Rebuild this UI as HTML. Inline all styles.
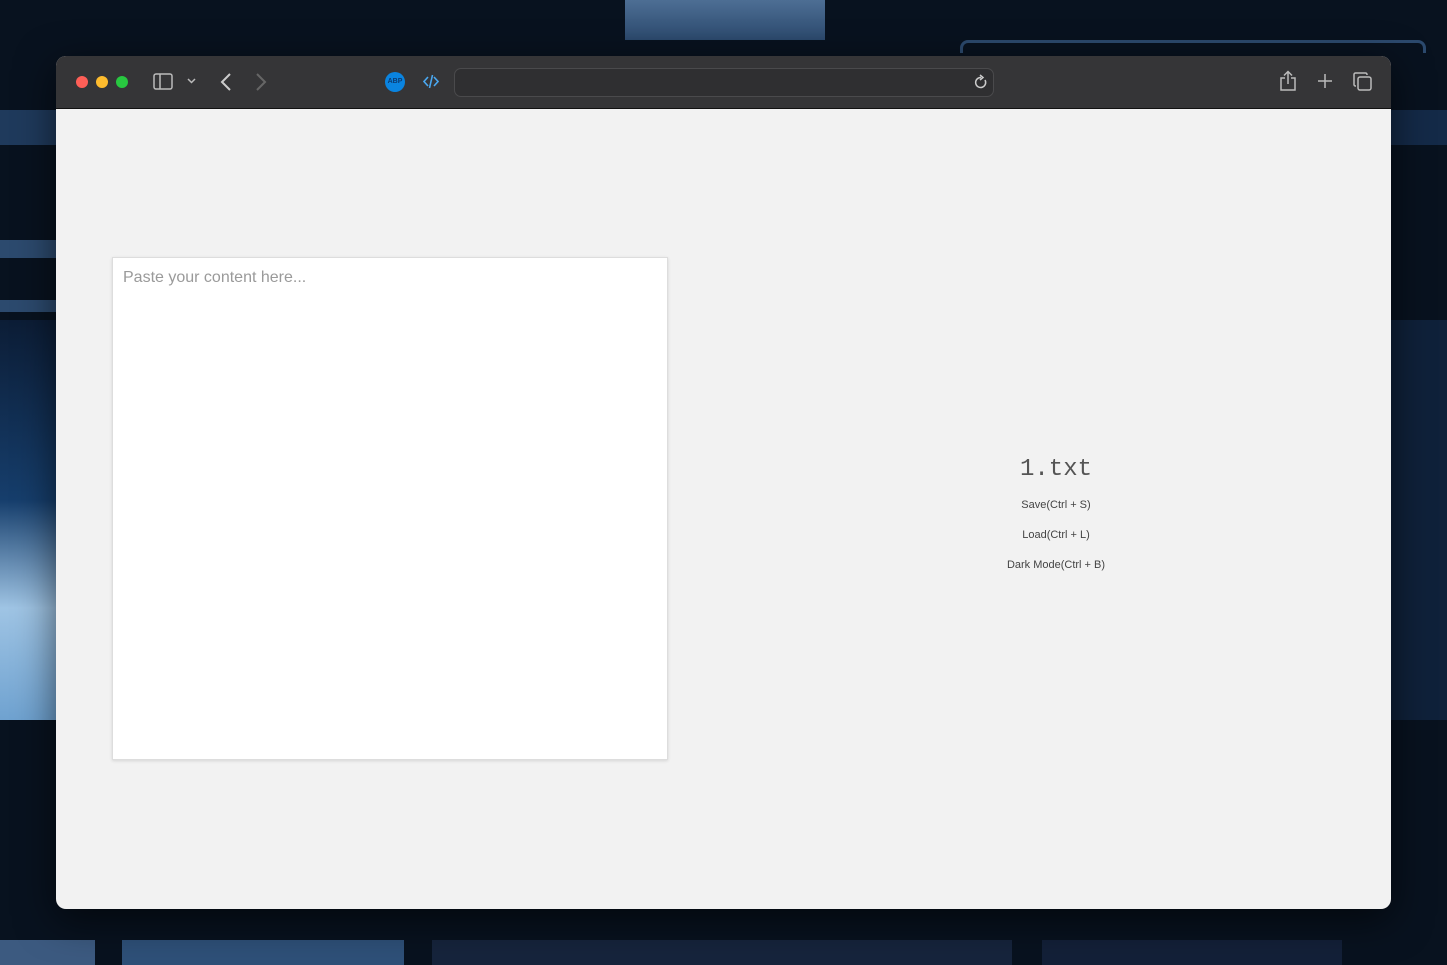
<!DOCTYPE html>
<html><head><meta charset="utf-8"><style>
html,body{margin:0;padding:0;width:1447px;height:965px;overflow:hidden;background:#08121f;font-family:"Liberation Sans",sans-serif;position:relative}
.bg{position:absolute}
.win{position:absolute;left:56px;top:56px;width:1335px;height:853px;border-radius:10px;overflow:hidden;background:#f2f2f2;box-shadow:0 10px 40px rgba(0,0,0,.6)}
.bar{position:absolute;left:0;top:0;width:100%;height:52px;background:#353537;border-bottom:1px solid #111}
.dot{position:absolute;top:20px;width:12px;height:12px;border-radius:50%}
.url{position:absolute;left:398px;top:12px;width:538px;height:27px;border:1px solid #4a4a4c;border-radius:7px;background:#2f2f31}
.ta{position:absolute;left:56px;top:201px;width:554px;height:501px;background:#fff;border:1px solid #ddd;box-shadow:0 1px 3px rgba(0,0,0,.12)}
.ph{position:absolute;left:10px;top:11px;font-size:16px;color:#9a9a9a}
.side{position:absolute;left:900px;width:200px;text-align:center;color:#444}
svg{position:absolute}
</style></head><body>
<div class="bg" style="left:0;top:110px;width:56px;height:35px;background:#1f3a5c"></div>
<div class="bg" style="left:0;top:240px;width:56px;height:18px;background:#2c4a6e"></div>
<div class="bg" style="left:0;top:300px;width:56px;height:12px;background:#2c4a6e"></div>
<div class="bg" style="left:0;top:320px;width:56px;height:400px;background:linear-gradient(180deg,#0c1d36 0%,#163e6c 45%,#9fc4e4 72%,#6fa2d0 100%)"></div>
<div class="bg" style="left:1391px;top:110px;width:56px;height:35px;background:#142a48"></div>
<div class="bg" style="left:1391px;top:320px;width:56px;height:400px;background:#0f213a"></div>
<div class="bg" style="left:625px;top:0;width:200px;height:40px;background:linear-gradient(#4d6e94,#2c4a6e)"></div>
<div class="bg" style="left:960px;top:40px;width:460px;height:10px;border:3px solid #2c4a6e;border-bottom:none;border-radius:8px 8px 0 0"></div>
<div class="bg" style="left:0;top:940px;width:95px;height:25px;background:#3c5a80"></div>
<div class="bg" style="left:122px;top:940px;width:282px;height:25px;background:#2e5078"></div>
<div class="bg" style="left:432px;top:940px;width:580px;height:25px;background:#16243c"></div>
<div class="bg" style="left:1042px;top:940px;width:300px;height:25px;background:#132038"></div>
<div class="win">
<div class="bar">
<div class="dot" style="left:20px;background:#fe5f57"></div>
<div class="dot" style="left:40px;background:#febc2e"></div>
<div class="dot" style="left:60px;background:#28c840"></div>
<svg style="left:97px;top:17px" width="20" height="17" viewBox="0 0 20 17"><rect x="1" y="1" width="18" height="15" rx="2" fill="none" stroke="#bbb" stroke-width="1.5"/><line x1="7" y1="1" x2="7" y2="16" stroke="#bbb" stroke-width="1.5"/></svg>
<svg style="left:131px;top:22px" width="9" height="6" viewBox="0 0 9 6"><path d="M1 1l3.5 3.5L8 1" fill="none" stroke="#bbb" stroke-width="1.5"/></svg>
<svg style="left:164px;top:17px" width="12" height="18" viewBox="0 0 12 18"><path d="M10 1L2 9l8 8" fill="none" stroke="#ccc" stroke-width="2"/></svg>
<svg style="left:199px;top:17px" width="12" height="18" viewBox="0 0 12 18"><path d="M2 1l8 8-8 8" fill="none" stroke="#666" stroke-width="2"/></svg>
<div style="position:absolute;left:329px;top:16px;width:20px;height:20px;border-radius:50%;background:#0a84e0;color:#0c3a70;font-size:7px;line-height:20px;text-align:center;font-weight:bold">ABP</div>
<svg style="left:367px;top:17px" width="16" height="17" viewBox="0 0 16 17"><path d="M5 4L1 8.5 5 13M11 4l4 4.5-4 4.5M9.5 2L6.5 15" fill="none" stroke="#4aa8f0" stroke-width="1.6"/></svg>
<div class="url"></div>
<svg style="left:918px;top:18px" width="14" height="16" viewBox="0 0 14 16"><path d="M11 6A5 5 0 1 1 7 3.5" fill="none" stroke="#ccc" stroke-width="1.5"/><path d="M6 1l3 2.5L6 6" fill="none" stroke="#ccc" stroke-width="1.5"/></svg>
<svg style="left:1223px;top:14px" width="18" height="22" viewBox="0 0 18 22"><path d="M6 8H2v12h14V8h-4M9 14V2M5 5.5L9 1.5l4 4" fill="none" stroke="#bbb" stroke-width="1.5"/></svg>
<svg style="left:1261px;top:17px" width="16" height="16" viewBox="0 0 16 16"><path d="M8 1v14M1 8h14" stroke="#bbb" stroke-width="1.5"/></svg>
<svg style="left:1297px;top:16px" width="19" height="19" viewBox="0 0 19 19"><rect x="5" y="5" width="13" height="13" rx="2" fill="none" stroke="#bbb" stroke-width="1.5"/><path d="M3 14H2.5A1.5 1.5 0 0 1 1 12.5V2.5A1.5 1.5 0 0 1 2.5 1h10A1.5 1.5 0 0 1 14 2.5V3" fill="none" stroke="#bbb" stroke-width="1.5"/></svg>
</div>
<div class="ta"><div class="ph">Paste your content here...</div></div>
<div class="side" style="top:400px;font-family:'Liberation Mono',monospace;font-size:24px;color:#555">1.txt</div>
<div class="side" style="top:443px;font-size:11px">Save(Ctrl + S)</div>
<div class="side" style="top:473px;font-size:11px">Load(Ctrl + L)</div>
<div class="side" style="top:503px;font-size:11px">Dark Mode(Ctrl + B)</div>
</div>
</body></html>
